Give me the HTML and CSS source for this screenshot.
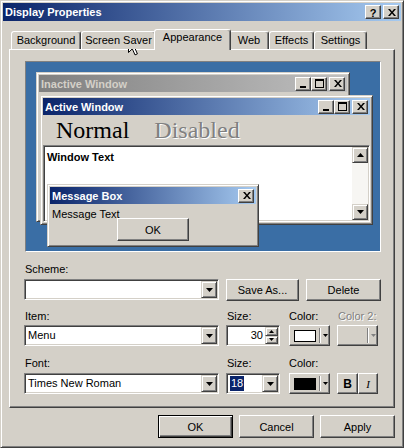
FILE: index.html
```html
<!DOCTYPE html>
<html>
<head>
<meta charset="utf-8">
<title>Display Properties</title>
<link rel="stylesheet" href="styles.css">
</head>
<body>
<div class="win">
  <div class="titlebar">
    <span class="title">Display Properties</span>
    <div class="caps">
      <span class="cbtn help">?</span>
      <span class="cbtn"><svg class="g-close" viewBox="0 0 8 7"><path d="M0 0h2l2 2.4 2-2.4h2l-3 3.5 3 3.5h-2l-2-2.4-2 2.4h-2l3-3.5z"/></svg></span>
    </div>
  </div>
  <div class="body">
    <div class="tabs">
      <div class="tab w1">Background</div>
      <div class="tab w2">Screen Saver</div>
      <div class="tab sel w3">Appearance</div>
      <div class="tab w4">Web</div>
      <div class="tab w5">Effects</div>
      <div class="tab w6">Settings</div>
    </div>
    <div class="panel">
      <div class="preview">
        <div class="pwin inactive">
          <div class="ptitle gray"><span>Inactive Window</span>
            <div class="pcaps">
              <span class="cbtn"><svg class="g-min" viewBox="0 0 8 7"><rect x="1" y="5" width="6" height="2"/></svg></span>
              <span class="cbtn"><svg class="g-max" viewBox="0 0 9 9"><path fill-rule="evenodd" d="M0 0h9v9h-9z M1 2h7v6h-7z"/></svg></span>
              <span class="cbtn gap"><svg class="g-close" viewBox="0 0 8 7"><path d="M0 0h2l2 2.4 2-2.4h2l-3 3.5 3 3.5h-2l-2-2.4-2 2.4h-2l3-3.5z"/></svg></span>
            </div>
          </div>
        </div>
        <div class="pwin active">
          <div class="ptitle blue"><span>Active Window</span>
            <div class="pcaps">
              <span class="cbtn"><svg class="g-min" viewBox="0 0 8 7"><rect x="1" y="5" width="6" height="2"/></svg></span>
              <span class="cbtn"><svg class="g-max" viewBox="0 0 9 9"><path fill-rule="evenodd" d="M0 0h9v9h-9z M1 2h7v6h-7z"/></svg></span>
              <span class="cbtn gap"><svg class="g-close" viewBox="0 0 8 7"><path d="M0 0h2l2 2.4 2-2.4h2l-3 3.5 3 3.5h-2l-2-2.4-2 2.4h-2l3-3.5z"/></svg></span>
            </div>
          </div>
          <div class="menubar"><span class="m-normal">Normal</span><span class="m-dis">Disabled</span></div>
          <div class="client">
            <div class="wtext">Window Text</div>
            <div class="vscroll">
              <span class="sbtn"><svg class="g-sarrow" viewBox="0 0 7 4"><path d="M3.5 0L7 4H0z"/></svg></span>
              <span class="strack"></span>
              <span class="sbtn"><svg class="g-sarrow" viewBox="0 0 7 4"><path d="M0 0h7L3.5 4z"/></svg></span>
            </div>
          </div>
        </div>
        <div class="pwin msg">
          <div class="ptitle blue"><span>Message Box</span>
            <div class="pcaps">
              <span class="cbtn"><svg class="g-close" viewBox="0 0 8 7"><path d="M0 0h2l2 2.4 2-2.4h2l-3 3.5 3 3.5h-2l-2-2.4-2 2.4h-2l3-3.5z"/></svg></span>
            </div>
          </div>
          <div class="msgbody">
            <div class="msgtext">Message Text</div>
            <div class="btn okp">OK</div>
          </div>
        </div>
      </div>

      <div class="lbl l-scheme">Scheme:</div>
      <div class="row r-scheme">
        <div class="combo c-main"><span class="ctext"></span><span class="ddbtn"><svg class="g-dd" viewBox="0 0 7 4"><path d="M0 0h7L3.5 4z"/></svg></span></div>
        <div class="btn b-save">Save As...</div>
        <div class="btn b-del">Delete</div>
      </div>

      <div class="lbl lrow l-item">
        <span class="lc1">Item:</span><span class="lc2">Size:</span><span class="lc3">Color:</span><span class="lc4 dim">Color 2:</span>
      </div>
      <div class="row r-item">
        <div class="combo c-main"><span class="ctext">Menu</span><span class="ddbtn"><svg class="g-dd" viewBox="0 0 7 4"><path d="M0 0h7L3.5 4z"/></svg></span></div>
        <div class="spin">
          <span class="spintext">30</span>
          <span class="spinbtns">
            <span class="spb"><svg class="g-spin" viewBox="0 0 5 3"><path d="M2.5 0L5 3H0z"/></svg></span>
            <span class="spb"><svg class="g-spin" viewBox="0 0 5 3"><path d="M0 0h5L2.5 3z"/></svg></span>
          </span>
        </div>
        <div class="btn colbtn"><span class="swatch white"></span><span class="sep"></span><svg class="g-cdd" viewBox="0 0 5 3"><path d="M0 0h5L2.5 3z"/></svg></div>
        <div class="btn colbtn dis"><span class="swatch none"></span><span class="sep"></span><svg class="g-cdd" viewBox="0 0 5 3"><path d="M0 0h5L2.5 3z"/></svg></div>
      </div>

      <div class="lbl lrow l-font">
        <span class="lc1">Font:</span><span class="lc2">Size:</span><span class="lc3">Color:</span>
      </div>
      <div class="row r-font">
        <div class="combo c-main"><span class="ctext">Times New Roman</span><span class="ddbtn"><svg class="g-dd" viewBox="0 0 7 4"><path d="M0 0h7L3.5 4z"/></svg></span></div>
        <div class="combo c-size"><span class="ctext"><span class="hl">18</span></span><span class="ddbtn"><svg class="g-dd" viewBox="0 0 7 4"><path d="M0 0h7L3.5 4z"/></svg></span></div>
        <div class="btn colbtn"><span class="swatch black"></span><span class="sep"></span><svg class="g-cdd" viewBox="0 0 5 3"><path d="M0 0h5L2.5 3z"/></svg></div>
        <div class="btn b-bold">B</div>
        <div class="btn b-ital">I</div>
      </div>
    </div>

    <div class="actions">
      <div class="btn act def">OK</div>
      <div class="btn act">Cancel</div>
      <div class="btn act">Apply</div>
    </div>
  </div>
</div>
<svg class="cursor" viewBox="0 0 13 20" width="13" height="20"><path d="M0.5 0.5V16.5L4.3 12.8L7 18.9L9.4 17.9L6.8 11.9H11.8Z" fill="#fff" stroke="#000" stroke-width="1" stroke-linejoin="miter"/></svg>
</body>
</html>
```

FILE: styles.css
```css
* { box-sizing: border-box; }
html, body { margin: 0; padding: 0; }
body {
  width: 404px;
  height: 448px;
  overflow: hidden;
  background: #d4d0c8;
  font-family: "Liberation Sans", Arial, sans-serif;
  font-size: 11px;
  color: #000;
}
.win {
  width: 404px;
  height: 448px;
  background: #d4d0c8;
  border: 1px solid;
  border-color: #d4d0c8 #404040 #404040 #d4d0c8;
  box-shadow: inset 1px 1px #fff, inset -1px -1px #808080;
  padding: 2px;
  display: flex;
  flex-direction: column;
}
.titlebar {
  height: 18px;
  flex: none;
  display: flex;
  align-items: center;
  justify-content: space-between;
  background: linear-gradient(to right, #0a246a, #a6caf0);
  padding: 0 2px 0 2px;
}
.title { color: #fff; font-weight: bold; font-size: 11px; }
.caps { display: flex; gap: 2px; }
.cbtn {
  width: 16px;
  height: 14px;
  background: #d4d0c8;
  border: 1px solid;
  border-color: #fff #404040 #404040 #fff;
  box-shadow: inset -1px -1px #808080, inset 1px 1px #d4d0c8;
  display: flex;
  align-items: center;
  justify-content: center;
}
.help { font-weight: bold; font-size: 11px; line-height: 12px; padding-top: 1px; }
.g-close { width: 8px; height: 7px; display: block; margin-left: 1px; }
.g-min { width: 8px; height: 7px; display: block; margin-top: 1px; }
.g-max { width: 9px; height: 9px; display: block; }

.body {
  flex: 1;
  display: flex;
  flex-direction: column;
  padding: 8px 6px 0 6px;
}
.tabs {
  display: flex;
  align-items: flex-end;
  height: 20px;
  padding-left: 2px;
  position: relative;
  z-index: 1;
  flex: none;
}
.tab {
  height: 18px;
  border: 1px solid;
  border-bottom: 0;
  border-color: #fff #404040 transparent #fff;
  border-radius: 3px 3px 0 0;
  box-shadow: inset -1px 0 #808080;
  text-align: center;
  line-height: 16px;
  background: #d4d0c8;
}
.w1 { width: 70px; }
.w2 { width: 75px; }
.w3 { width: 77px; }
.w4 { width: 40px; }
.w5 { width: 45px; }
.w6 { width: 53px; }
.tab.sel {
  height: 21px;
  margin: 0 -2px -1px -2px;
  line-height: 15px;
  position: relative;
  z-index: 2;
}
.panel {
  height: 359px;
  flex: none;
  border: 1px solid;
  border-color: #fff #404040 #404040 #fff;
  box-shadow: inset -1px -1px #808080;
  padding: 11px 13px 0 14px;
  display: flex;
  flex-direction: column;
}
.preview {
  position: relative;
  width: 356px;
  height: 191px;
  margin-left: 1px;
  flex: none;
  border: 1px solid;
  border-color: #808080 #fff #fff #808080;
  background: #3a6ea5;
  overflow: hidden;
}
.pwin {
  position: absolute;
  background: #d4d0c8;
  border: 1px solid;
  border-color: #d4d0c8 #404040 #404040 #d4d0c8;
  box-shadow: inset 1px 1px #fff, inset -1px -1px #808080;
  padding: 2px;
  display: flex;
  flex-direction: column;
}
.inactive { left: 10px; top: 10px; width: 314px; height: 150px; }
.active { left: 14px; top: 33px; width: 333px; height: 130px; }
.msg { left: 21px; top: 122px; width: 212px; height: 63px; }
.ptitle {
  height: 17px;
  flex: none;
  display: flex;
  align-items: center;
  justify-content: space-between;
  padding: 0 2px 0 2px;
  font-weight: bold;
  font-size: 11px;
}
.ptitle.gray { background: linear-gradient(to right, #808080, #c0c0c0); color: #d4d0c8; }
.ptitle.blue { background: linear-gradient(to right, #0a246a, #a6caf0); color: #fff; }
.pcaps { display: flex; }
.pcaps .cbtn.gap { margin-left: 2px; }
.menubar {
  height: 30px;
  flex: none;
  display: flex;
  align-items: center;
  font-family: "Liberation Serif", "Times New Roman", serif;
  font-size: 24px;
  line-height: 28px;
}
.m-normal { margin-left: 13px; }
.m-dis { margin-left: 25px; color: #808080; text-shadow: 1px 1px #fff; }
.client {
  flex: 1;
  display: flex;
  background: #fff;
  border: 1px solid;
  border-color: #808080 #fff #fff #808080;
  box-shadow: inset 1px 1px #404040, inset -1px -1px #d4d0c8;
  padding: 1px;
}
.wtext {
  flex: 1;
  font-weight: bold;
  padding: 4px 0 0 2px;
  line-height: 13px;
}
.vscroll { width: 16px; display: flex; flex-direction: column; }
.sbtn {
  height: 16px;
  flex: none;
  background: #d4d0c8;
  border: 1px solid;
  border-color: #d4d0c8 #404040 #404040 #d4d0c8;
  box-shadow: inset 1px 1px #fff, inset -1px -1px #808080;
  display: flex;
  align-items: center;
  justify-content: center;
}
.g-sarrow { width: 7px; height: 4px; display: block; }
.strack {
  flex: 1;
  background: #f7f6f3;
}
.msgbody { flex: 1; padding: 4px 0 0 2px; }
.msgtext { line-height: 13px; }
.okp {
  width: 72px;
  height: 23px;
  margin: -3px 0 0 65px;
  position: relative;
}

.btn {
  background: #d4d0c8;
  border: 1px solid;
  border-color: #fff #404040 #404040 #fff;
  box-shadow: inset -1px -1px #808080, inset 1px 1px #d4d0c8;
  display: flex;
  align-items: center;
  justify-content: center;
  flex: none;
}
.lbl { height: 13px; line-height: 13px; flex: none; padding-left: 1px; }
.l-scheme { margin-top: 11px; }
.lrow { display: flex; padding-left: 0; }
.lc1 { width: 202px; padding-left: 1px; }
.lc2 { width: 63px; padding-left: 1px; }
.lc3 { width: 48px; }
.lc4 { padding-left: 1px; }
.dim { color: #808080; text-shadow: 1px 1px #fff; }
.l-item { margin-top: 9px; }
.l-font { margin-top: 11px; }
.row { display: flex; align-items: flex-start; flex: none; }
.r-scheme { margin-top: 3px; }
.r-item { margin-top: 2px; }
.r-font { margin-top: 3px; }

.combo {
  height: 21px;
  background: #fff;
  border: 1px solid;
  border-color: #808080 #fff #fff #808080;
  box-shadow: inset 1px 1px #404040, inset -1px -1px #d4d0c8;
  padding: 1px;
  display: flex;
  flex: none;
}
.c-main { width: 195px; }
.c-size { width: 54px; margin-left: 7px; }
.ctext { flex: 1; padding-left: 2px; line-height: 17px; white-space: nowrap; overflow: hidden; }
.hl { background: #0a246a; color: #fff; padding: 0 1px; display: inline-block; line-height: 15px; margin-top: 1px; }
.ddbtn {
  width: 16px;
  height: 17px;
  background: #d4d0c8;
  border: 1px solid;
  border-color: #d4d0c8 #404040 #404040 #d4d0c8;
  box-shadow: inset 1px 1px #fff, inset -1px -1px #808080;
  display: flex;
  align-items: center;
  justify-content: center;
}
.g-dd { width: 7px; height: 4px; display: block; }
.b-save { width: 73px; height: 22px; margin-left: 7px; }
.b-del { width: 75px; height: 22px; margin-left: 7px; }

.spin {
  width: 54px;
  height: 21px;
  margin-left: 7px;
  background: #fff;
  border: 1px solid;
  border-color: #808080 #fff #fff #808080;
  box-shadow: inset 1px 1px #404040, inset -1px -1px #d4d0c8;
  padding: 1px 1px 1px 1px;
  display: flex;
}
.spintext { flex: 1; text-align: right; padding-right: 2px; line-height: 17px; }
.spinbtns { width: 13px; display: flex; flex-direction: column; }
.spb {
  flex: 1;
  background: #d4d0c8;
  border: 1px solid;
  border-color: #d4d0c8 #404040 #404040 #d4d0c8;
  box-shadow: inset 1px 1px #fff, inset -1px -1px #808080;
  display: flex;
  align-items: center;
  justify-content: center;
}
.g-spin { width: 5px; height: 3px; display: block; }

.colbtn {
  width: 41px;
  height: 21px;
  justify-content: flex-start;
  padding-left: 4px;
}
.r-item .colbtn { margin-left: 9px; }
.r-item .colbtn.dis { margin-left: 7px; }
.r-font .colbtn { margin-left: 9px; }
.swatch { width: 22px; height: 12px; flex: none; }
.swatch.white { background: #fff; border: 1px solid #000; }
.swatch.black { background: #000; border: 1px solid #000; }
.swatch.none { background: transparent; }
.sep { width: 2px; height: 15px; margin-left: 3px; border-left: 1px solid #808080; border-right: 1px solid #fff; flex: none; }
.g-cdd { width: 5px; height: 3px; display: block; margin-left: 2px; }
.dis .g-cdd { fill: #808080; }
.b-bold { width: 21px; height: 21px; margin-left: 7px; font-weight: bold; font-size: 12px; }
.b-ital { width: 20px; height: 21px; font-style: italic; font-size: 11px; font-family: "Liberation Serif", serif; }

.actions {
  display: flex;
  justify-content: flex-end;
  gap: 6px;
  margin-top: 7px;
  flex: none;
}
.act { width: 75px; height: 23px; }
.btn.def {
  border-color: #000;
  box-shadow: inset 1px 1px #fff, inset -1px -1px #404040, inset -2px -2px #808080;
}
.cursor { position: absolute; left: 128px; top: 36px; }
```
